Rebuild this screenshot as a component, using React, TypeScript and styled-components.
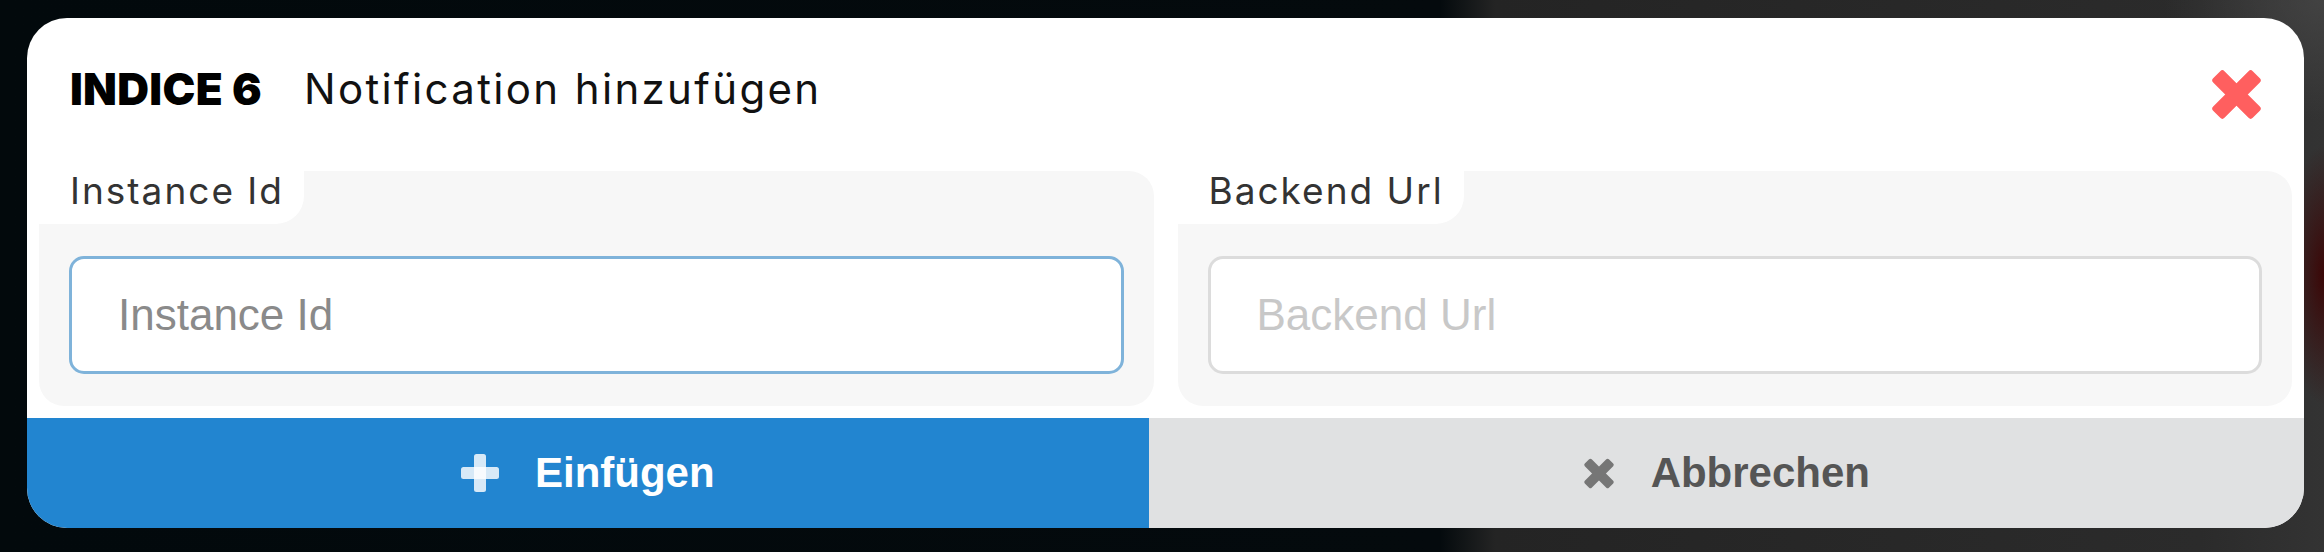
import React from "react";
import styled, { createGlobalStyle } from "styled-components";

const Global = createGlobalStyle`
  html, body { margin: 0; padding: 0; }
  body { width: 2324px; height: 552px; overflow: hidden; background: #03090c; }
  * { box-sizing: border-box; }
`;

const Backdrop = styled.div`
  width: 2324px;
  height: 552px;
  padding: 18px 20px 24px 27px;
  background:
    radial-gradient(40px 130px at 2324px 275px, rgba(60, 2, 2, 0.9), rgba(40, 0, 0, 0) 100%),
    radial-gradient(160px 120px at 2324px 0px, rgba(70, 70, 70, 0.8), rgba(60, 60, 60, 0) 100%),
    linear-gradient(90deg, #02090c 0px, #040a0d 1440px, #242424 1495px, #2b2b2b 2200px, #333 2324px);
`;

const Modal = styled.div`
  width: 2277px;
  height: 510px;
  background: #fff;
  border-radius: 40px;
  overflow: hidden;
  display: flex;
  flex-direction: column;
`;

const Header = styled.header`
  height: 141px;
  flex: none;
  display: flex;
  align-items: center;
  padding: 0 42px 0 43px;
`;

const Brand = styled.span`
  font-family: Inter, "Noto Sans", sans-serif;
  font-weight: 900;
  font-size: 44px;
  letter-spacing: 0.3px;
  color: #000;
`;

const Title = styled.h1`
  margin: 0 0 0 42px;
  font-family: Inter, "Noto Sans", sans-serif;
  font-weight: 400;
  font-size: 42px;
  letter-spacing: 2.35px;
  color: #111;
`;

const CloseButton = styled.button`
  margin-left: auto;
  margin-top: 12px;
  width: 51px;
  height: 51px;
  padding: 0;
  border: none;
  background: none;
  color: #ff5f5f;
  display: flex;
  cursor: pointer;
`;

const Body = styled.div`
  display: grid;
  grid-template-columns: 1fr 1fr;
  flex: none;
`;

const Column = styled.div`
  padding: 12px;
`;

const Panel = styled.div`
  background: #f7f7f7;
  border-radius: 25px;
  display: flex;
  flex-direction: column;
`;

const LabelTab = styled.label`
  align-self: flex-start;
  height: 53px;
  padding: 0 20px 0 31px;
  background: #fff;
  border-bottom-right-radius: 28px;
  font-family: Inter, "Noto Sans", sans-serif;
  font-weight: 400;
  font-size: 37px;
  line-height: 40px;
  letter-spacing: 2px;
  color: #333;
`;

const InputWrap = styled.div`
  padding: 32px 30px;
`;

const TextInput = styled.input<{ $focused?: boolean }>`
  display: block;
  width: 100%;
  height: 118px;
  border: 3px solid ${(p) => (p.$focused ? "#7fb3da" : "#dcdcdc")};
  border-radius: 15px;
  background: #fff;
  padding: 0 0 0 46px;
  font-family: "Liberation Sans", Arial, sans-serif;
  font-size: 44px;
  color: #333;
  outline: none;
  &::placeholder {
    color: ${(p) => (p.$focused ? "#8a8a8a" : "#c8c8c8")};
  }
`;

const Footer = styled.footer`
  display: flex;
  height: 110px;
  flex: none;
`;

const ActionButton = styled.button<{ $variant: "primary" | "secondary" }>`
  flex: 1 1 auto;
  display: flex;
  align-items: center;
  justify-content: center;
  gap: 36px;
  border: none;
  margin: 0;
  padding: 0;
  font-family: "Liberation Sans", Arial, sans-serif;
  font-weight: 700;
  font-size: 42px;
  cursor: pointer;
  background: ${(p) => (p.$variant === "primary" ? "#2285d0" : "#e0e1e2")};
  color: ${(p) => (p.$variant === "primary" ? "#ffffff" : "#555555")};
`;

const IconSlot = styled.span<{ $tone: string }>`
  display: flex;
  color: ${(p) => p.$tone};
`;

const TimesIcon = ({ w, h }: { w: number; h: number }) => (
  <svg width={w} height={h} viewBox="0 0 51 51" fill="currentColor" aria-hidden>
    <rect x={-2.5} y={17.5} width={56} height={16} rx={3} transform="rotate(45 25.5 25.5)" />
    <rect x={-2.5} y={17.5} width={56} height={16} rx={3} transform="rotate(-45 25.5 25.5)" />
  </svg>
);

const PlusIcon = () => (
  <svg width={38} height={38} viewBox="0 0 38 38" fill="currentColor" aria-hidden>
    <rect x={13} y={0} width={12} height={38} rx={2.5} />
    <rect x={0} y={13} width={38} height={12} rx={2.5} />
  </svg>
);

const fields = [
  { id: "instanceId", label: "Instance Id", focused: true },
  { id: "backendUrl", label: "Backend Url", focused: false },
];

export default function App() {
  return (
    <>
      <Global />
      <Backdrop>
        <Modal>
          <Header>
            <Brand>INDICE 6</Brand>
            <Title>Notification hinzufügen</Title>
            <CloseButton aria-label="Schließen">
              <TimesIcon w={51} h={51} />
            </CloseButton>
          </Header>
          <Body>
            {fields.map((f) => (
              <Column key={f.id}>
                <Panel>
                  <LabelTab htmlFor={f.id}>{f.label}</LabelTab>
                  <InputWrap>
                    <TextInput id={f.id} placeholder={f.label} $focused={f.focused} />
                  </InputWrap>
                </Panel>
              </Column>
            ))}
          </Body>
          <Footer>
            <ActionButton $variant="primary">
              <IconSlot $tone="rgba(255,255,255,0.82)">
                <PlusIcon />
              </IconSlot>
              Einfügen
            </ActionButton>
            <ActionButton $variant="secondary">
              <IconSlot $tone="#767676">
                <TimesIcon w={32} h={31} />
              </IconSlot>
              Abbrechen
            </ActionButton>
          </Footer>
        </Modal>
      </Backdrop>
    </>
  );
}
